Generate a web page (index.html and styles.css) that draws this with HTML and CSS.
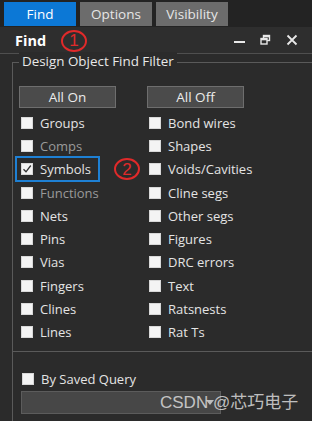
FILE: index.html
```html
<!DOCTYPE html>
<html>
<head>
<meta charset="utf-8">
<link rel="stylesheet" href="styles.css">
</head>
<body>
<div class="app">
  <div class="tabs">
    <div class="tab active">Find</div>
    <div class="tab">Options</div>
    <div class="tab">Visibility</div>
  </div>
  <div class="titlebar">
    <span class="title">Find</span>
    <span class="mark mark1">1</span>
    <div class="winbtns">
      <svg class="ico" width="12" height="12" viewBox="0 0 12 12"><rect x="0" y="7" width="11" height="2" fill="#e8e8e8"/></svg>
      <svg class="ico" width="12" height="12" viewBox="0 0 12 12"><rect x="3.5" y="1.5" width="6" height="5" fill="none" stroke="#e8e8e8" stroke-width="1.4"/><rect x="3.5" y="1.5" width="6" height="1.8" fill="#e8e8e8"/><rect x="1" y="4.5" width="6" height="5.5" fill="#2d2d2d" stroke="#e8e8e8" stroke-width="1.4"/><rect x="1" y="4.5" width="6" height="1.8" fill="#e8e8e8"/></svg>
      <svg class="ico" width="12" height="12" viewBox="0 0 12 12"><path d="M1.5 1.5 L10.5 10.5 M10.5 1.5 L1.5 10.5" stroke="#e8e8e8" stroke-width="1.8"/></svg>
    </div>
  </div>
  <div class="panel">
    <div class="group main">
      <span class="legend">Design Object Find Filter</span>
      <div class="cols">
        <div class="col">
          <div class="btn">All On</div>
          <div class="row"><span class="cb"></span><span class="lbl">Groups</span></div>
          <div class="row"><span class="cb"></span><span class="lbl dim">Comps</span></div>
          <div class="row"><span class="hl"><span class="cb checked"><svg width="10" height="10" viewBox="0 0 10 10"><path d="M1.5 5.2 L4 7.8 L8.8 1.5" fill="none" stroke="#333" stroke-width="1.3"/></svg></span><span class="lbl">Symbols</span></span><span class="mark mark2">2</span></div>
          <div class="row"><span class="cb"></span><span class="lbl dim">Functions</span></div>
          <div class="row"><span class="cb"></span><span class="lbl">Nets</span></div>
          <div class="row"><span class="cb"></span><span class="lbl">Pins</span></div>
          <div class="row"><span class="cb"></span><span class="lbl">Vias</span></div>
          <div class="row"><span class="cb"></span><span class="lbl">Fingers</span></div>
          <div class="row"><span class="cb"></span><span class="lbl">Clines</span></div>
          <div class="row"><span class="cb"></span><span class="lbl">Lines</span></div>
        </div>
        <div class="col">
          <div class="btn">All Off</div>
          <div class="row"><span class="cb"></span><span class="lbl">Bond wires</span></div>
          <div class="row"><span class="cb"></span><span class="lbl">Shapes</span></div>
          <div class="row"><span class="cb"></span><span class="lbl">Voids/Cavities</span></div>
          <div class="row"><span class="cb"></span><span class="lbl">Cline segs</span></div>
          <div class="row"><span class="cb"></span><span class="lbl">Other segs</span></div>
          <div class="row"><span class="cb"></span><span class="lbl">Figures</span></div>
          <div class="row"><span class="cb"></span><span class="lbl">DRC errors</span></div>
          <div class="row"><span class="cb"></span><span class="lbl">Text</span></div>
          <div class="row"><span class="cb"></span><span class="lbl">Ratsnests</span></div>
          <div class="row"><span class="cb"></span><span class="lbl">Rat Ts</span></div>
        </div>
      </div>
    </div>
    <div class="group query">
      <div class="row qrow"><span class="cb"></span><span class="lbl">By Saved Query</span></div>
      <div class="combo"><svg class="arrow" width="8" height="5" viewBox="0 0 8 5"><path d="M0 0 L8 0 L4 5 Z" fill="#bdbdbd"/></svg></div>
    </div>
  </div>
  <div class="watermark">CSDN @芯巧电子</div>
</div>
</body>
</html>
```

FILE: styles.css
```css
html, body {
  margin: 0;
  padding: 0;
  background: #2b2b2b;
}
.app {
  position: relative;
  width: 312px;
  height: 421px;
  overflow: hidden;
  font-family: "Open Sans", "Noto Sans", sans-serif;
  font-size: 13px;
  color: #e4e4e4;
  background: #2b2b2b;
}
.tabs {
  height: 27px;
  box-sizing: border-box;
  padding: 2px 0 0 4px;
  display: flex;
  gap: 4px;
  background: #232323;
}
.tab {
  width: 72px;
  height: 24px;
  display: flex;
  align-items: center;
  justify-content: center;
  background: #6c6c6c;
  color: #e6e6e6;
  font-size: 13.5px;
}
.tab.active {
  background: #0c78d6;
  color: #ffffff;
}
.titlebar {
  height: 26px;
  display: flex;
  align-items: center;
  padding-left: 15px;
  background: #2e2e2e;
  border-bottom: 1px solid #4f4f4f;
}
.title {
  font-weight: 700;
  font-size: 14.5px;
  color: #ffffff;
}
.mark {
  display: inline-flex;
  align-items: center;
  justify-content: center;
  box-sizing: border-box;
  width: 26px;
  height: 22px;
  border: 2px solid #e02a2a;
  border-radius: 50%;
  color: #e02a2a;
  font-family: "Liberation Sans", sans-serif;
  font-size: 17px;
  line-height: 1;
}
.mark1 {
  margin-left: 15px;
  margin-top: 1px;
}
.winbtns {
  margin-left: auto;
  display: flex;
  gap: 14px;
  padding-right: 14px;
  align-items: center;
}
.ico {
  display: block;
}
.panel {
  padding-top: 8px;
}
.group {
  margin-left: 12px;
  border-left: 1px solid #5a5a5a;
  border-top: 1px solid #5a5a5a;
  position: relative;
}
.main {
  height: 288px;
}
.legend {
  position: absolute;
  left: 6px;
  top: -11px;
  padding: 0 3px;
  background: #2b2b2b;
  color: #e8e8e8;
  font-size: 13.4px;
}
.cols {
  display: flex;
  padding: 23px 0 0 6px;
}
.col {
  width: 128px;
  display: flex;
  flex-direction: column;
}
.btn {
  width: 97px;
  height: 22px;
  box-sizing: border-box;
  background: #4b4b4b;
  border: 1px solid #6e6e6e;
  display: flex;
  align-items: center;
  justify-content: center;
  color: #ececec;
  font-size: 13.5px;
  margin-bottom: 3px;
}
.row {
  height: 23.3px;
  display: flex;
  align-items: center;
  padding-left: 2px;
  position: relative;
}
.cb {
  width: 12px;
  height: 12px;
  box-sizing: border-box;
  background: #f4f4f4;
  border: 1px solid #d8d8d8;
  flex: none;
  display: flex;
  align-items: center;
  justify-content: center;
}
.lbl {
  margin-left: 7px;
  white-space: nowrap;
}
.dim {
  color: #9a9a9a;
}
.hl {
  display: flex;
  align-items: center;
  margin-left: -6px;
  padding: 0 7px 0 4px;
  height: 22px;
  border: 2px solid #1e80d4;
}
.mark2 {
  margin-left: 14px;
}
.query {
  margin-top: 0;
  height: 80px;
  padding: 21px 0 0 7px;
  box-sizing: border-box;
}
.qrow {
  height: 11px;
  padding-left: 2px;
}
.combo {
  margin-top: 7px;
  margin-left: 1px;
  width: 200px;
  height: 23px;
  box-sizing: border-box;
  background: #474747;
  border: 1px solid #5c5c5c;
  position: relative;
}
.arrow {
  position: absolute;
  right: 6px;
  top: 8px;
}
.watermark {
  position: absolute;
  left: 160px;
  top: 388px;
  font-family: "Liberation Sans", "Noto Sans CJK SC", sans-serif;
  font-size: 17px;
  color: rgba(225, 225, 225, 0.82);
  white-space: nowrap;
}
```
